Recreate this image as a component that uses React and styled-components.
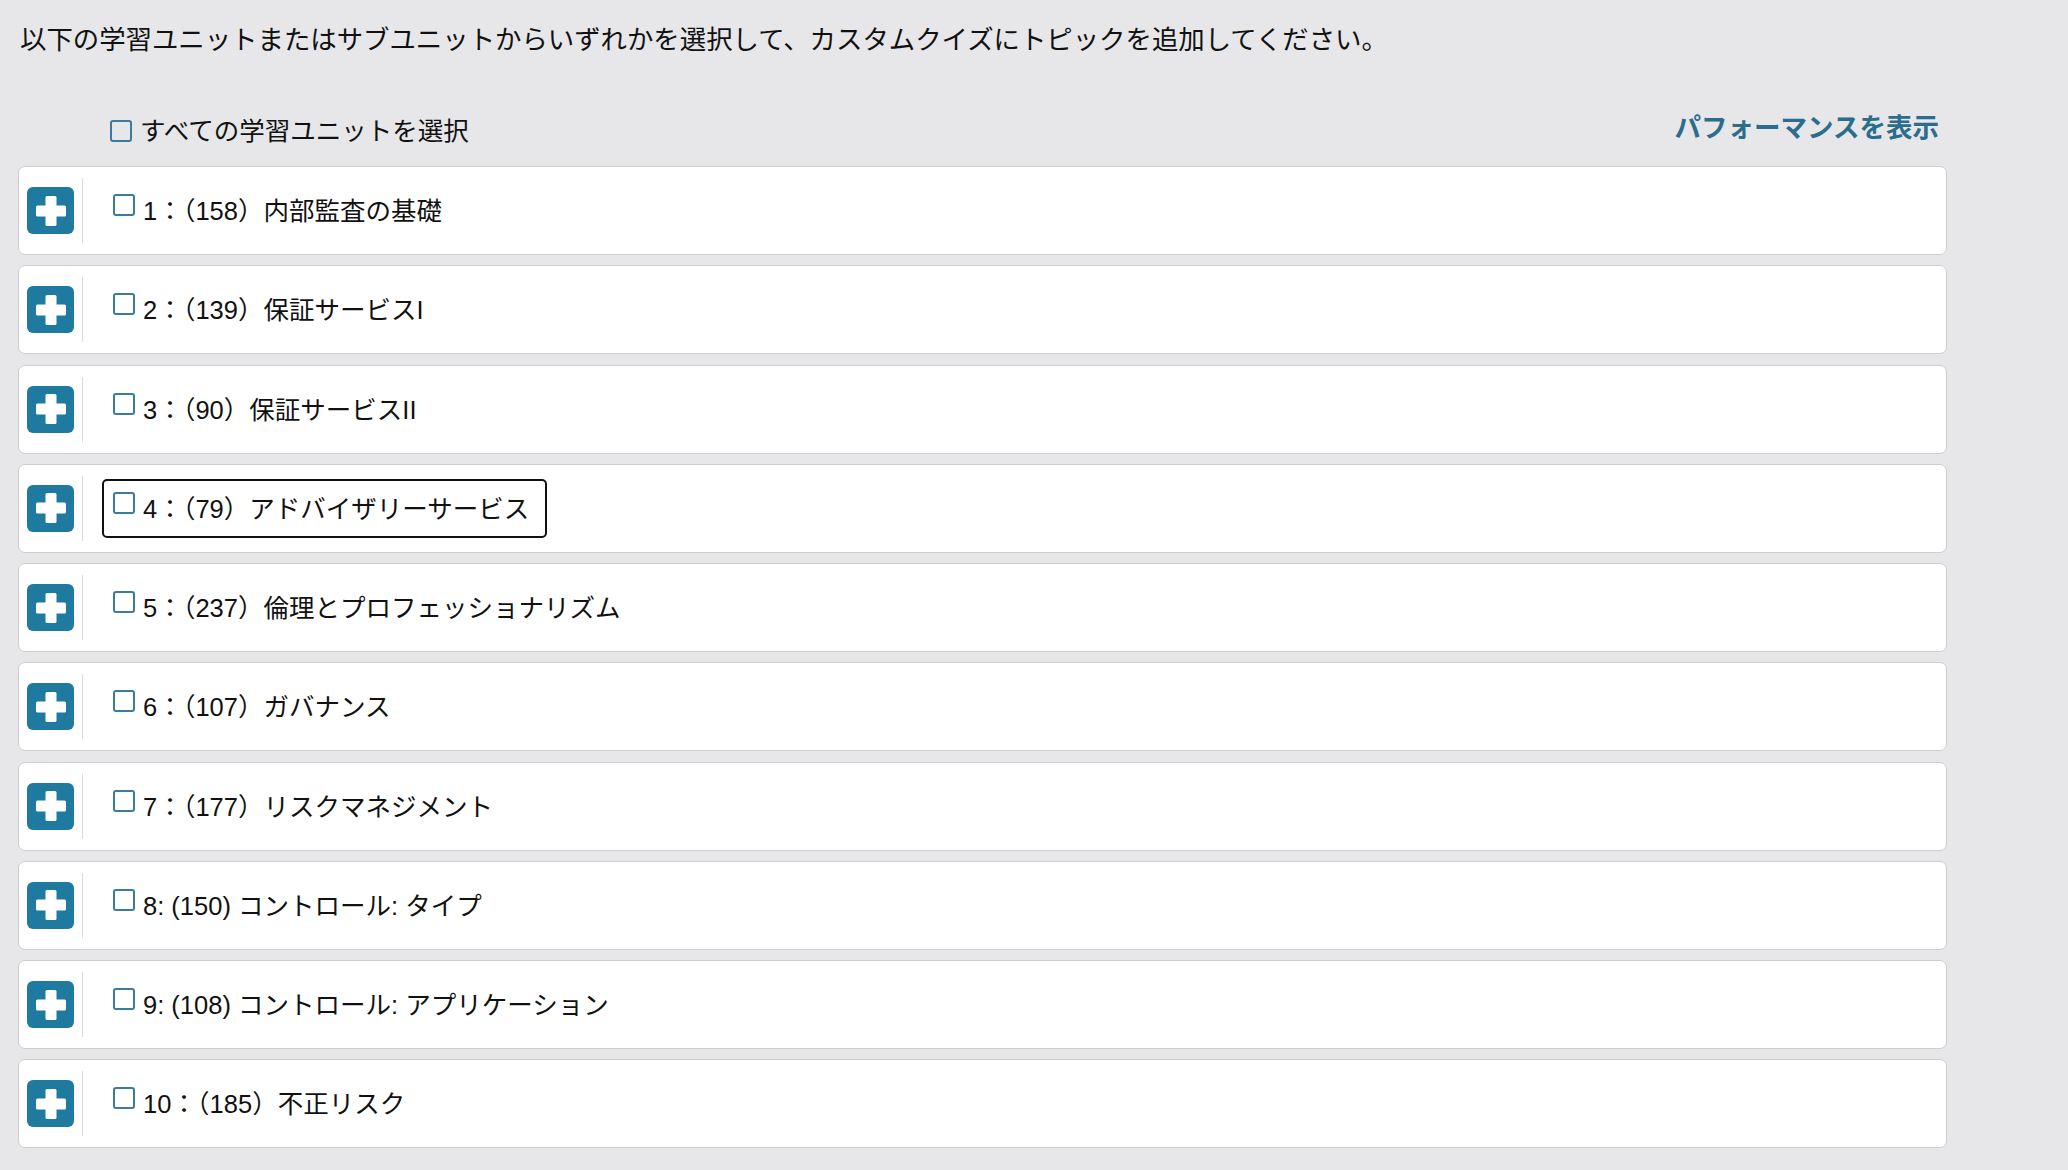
import React from "react";
import styled, { createGlobalStyle } from "styled-components";

const units = [
  { id: 1, label: "1：（158）内部監査の基礎" },
  { id: 2, label: "2：（139）保証サービスI" },
  { id: 3, label: "3：（90）保証サービスII" },
  { id: 4, label: "4：（79）アドバイザリーサービス", focused: true },
  { id: 5, label: "5：（237）倫理とプロフェッショナリズム" },
  { id: 6, label: "6：（107）ガバナンス" },
  { id: 7, label: "7：（177）リスクマネジメント" },
  { id: 8, label: "8: (150) コントロール: タイプ" },
  { id: 9, label: "9: (108) コントロール: アプリケーション" },
  { id: 10, label: "10：（185）不正リスク" },
];

function PlusIcon() {
  return (
    <svg width="30" height="30" viewBox="0 0 30 30">
      <rect x="9.5" y="0" width="11" height="30" rx="1.5" fill="#fff" />
      <rect x="0" y="9.5" width="30" height="11" rx="1.5" fill="#fff" />
    </svg>
  );
}

export default function App() {
  return (
    <>
      <GlobalStyle />
      <Page>
        <Intro>
          以下の学習ユニットまたはサブユニットからいずれかを選択して、カスタムクイズにトピックを追加してください。
        </Intro>

        <HeaderRow>
          <SelectAll>
            <Check />
            <span>すべての学習ユニットを選択</span>
          </SelectAll>
          <PerformanceLink href="#">パフォーマンスを表示</PerformanceLink>
        </HeaderRow>

        <UnitList>
          {units.map((unit) => (
            <UnitCard key={unit.id}>
              <ToggleCell>
                <ExpandButton type="button" aria-label="展開">
                  <PlusIcon />
                </ExpandButton>
              </ToggleCell>
              <UnitLabel $focused={unit.focused}>
                <Check $boxed />
                <UnitText>{unit.label}</UnitText>
              </UnitLabel>
            </UnitCard>
          ))}
        </UnitList>
      </Page>
    </>
  );
}

const GlobalStyle = createGlobalStyle`
  * {
    box-sizing: border-box;
  }
  body {
    margin: 0;
    background: #e7e7ea;
    color: #111;
    font-family: "Liberation Sans", "Noto Sans CJK JP", sans-serif;
  }
`;

const Page = styled.div`
  width: 1947px;
  padding: 22px 0 20px 18px;
`;

const Intro = styled.p`
  margin: 0 0 50px 2px;
  font-size: 26.4px;
  line-height: 36px;
  color: #111;
`;

const HeaderRow = styled.div`
  display: flex;
  align-items: center;
  justify-content: space-between;
  height: 46px;
  padding: 0 8px 0 92px;
  margin-bottom: 12px;
`;

const SelectAll = styled.label`
  display: flex;
  align-items: center;
  gap: 8px;
  font-size: 25.5px;
  line-height: 30px;
`;

const PerformanceLink = styled.a`
  font-size: 26.5px;
  font-weight: 700;
  color: #2b6d8b;
  text-decoration: none;
  padding-bottom: 12px;
`;

const Check = styled.span`
  flex: none;
  display: inline-block;
  width: 22px;
  height: 22px;
  border: 2px solid #3a7c9d;
  border-radius: 3px;
  background: ${(p) => (p.$boxed ? "#fff" : "transparent")};
  margin-top: ${(p) => (p.$boxed ? "1px" : "0")};
`;

const UnitList = styled.div`
  display: flex;
  flex-direction: column;
  gap: 10.25px;
`;

const UnitCard = styled.div`
  display: flex;
  align-items: center;
  height: 89px;
  background: #fff;
  border: 1px solid #cdcdd0;
  border-radius: 7px;
`;

const ToggleCell = styled.div`
  display: flex;
  align-items: center;
  height: 65px;
  padding: 0 8px;
  border-right: 1px solid #dcdcdc;
`;

const ExpandButton = styled.button`
  display: flex;
  align-items: center;
  justify-content: center;
  width: 47px;
  height: 47px;
  padding: 0;
  border: none;
  border-radius: 6px;
  background: #1e7a9e;
  cursor: pointer;
`;

const UnitLabel = styled.label`
  display: inline-flex;
  align-items: flex-start;
  gap: 8px;
  height: 59px;
  margin-left: 19px;
  padding: 10px 16px 10px 9px;
  border: 2px solid ${(p) => (p.$focused ? "#111" : "transparent")};
  border-radius: 5px;
`;

const UnitText = styled.span`
  font-size: 25.5px;
  line-height: 36px;
  color: #111;
  margin-top: 0;
`;
